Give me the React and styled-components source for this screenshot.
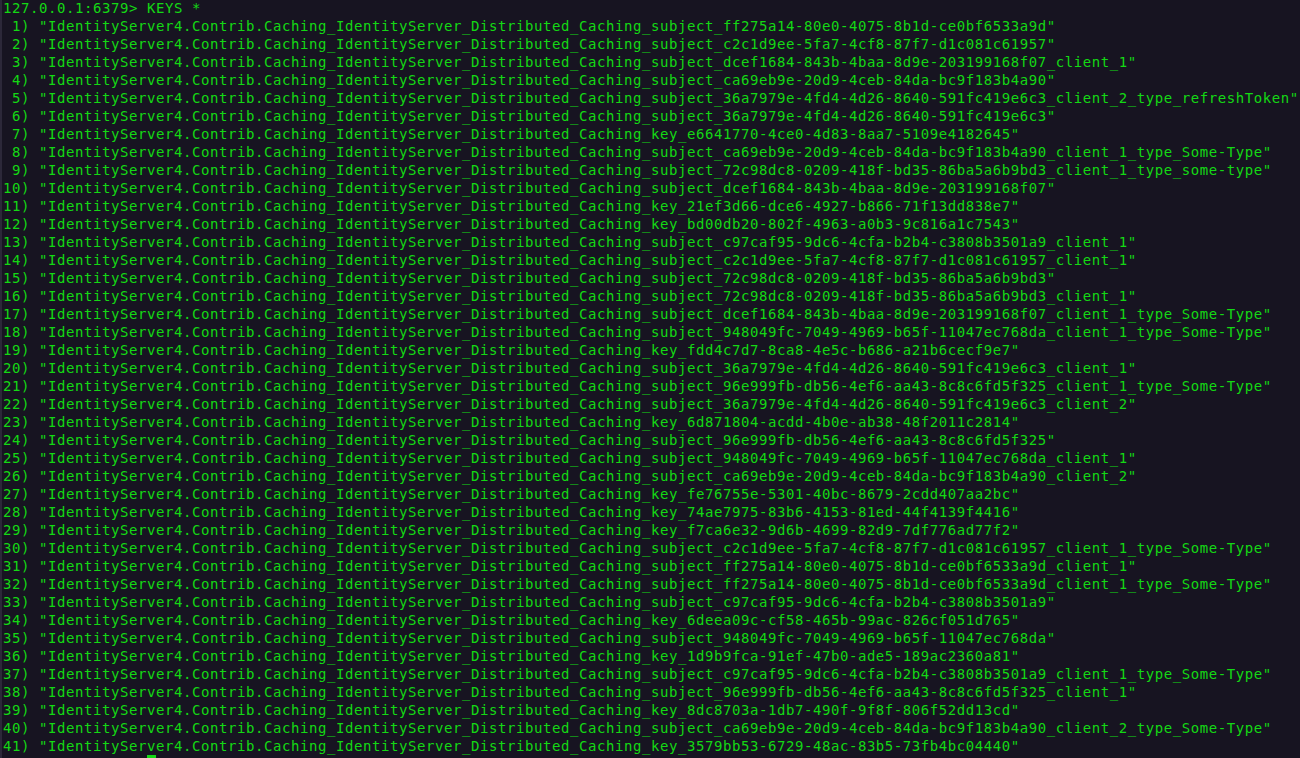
import React from "react";
import styled, { createGlobalStyle } from "styled-components";

const Global = createGlobalStyle`
  html, body {
    margin: 0;
    padding: 0;
    background: #171421;
    height: 758px;
    overflow: hidden;
  }
`;

const Terminal = styled.div`
  box-sizing: border-box;
  width: 1300px;
  height: 758px;
  overflow: hidden;
  background: #171421;
  border-left: 2px solid #2c2839;
  padding: 0 0 0 1px;
  font-family: "DejaVu Sans Mono", "Liberation Mono", monospace;
  font-size: 14px;
  letter-spacing: 0.57px;
  line-height: 18px;
  color: #14d814;
`;

const Screen = styled.div`
  margin-top: -1px;
  display: flex;
  flex-direction: column;
`;

const Line = styled.div`
  white-space: pre;
  height: 18px;
`;

const Cursor = styled.span`
  display: inline-block;
  width: 9px;
  height: 18px;
  vertical-align: top;
  background: #14d814;
`;

const PREFIX = "IdentityServer4.Contrib.Caching_IdentityServer_Distributed_Caching_";

const keys = [
  "subject_ff275a14-80e0-4075-8b1d-ce0bf6533a9d",
  "subject_c2c1d9ee-5fa7-4cf8-87f7-d1c081c61957",
  "subject_dcef1684-843b-4baa-8d9e-203199168f07_client_1",
  "subject_ca69eb9e-20d9-4ceb-84da-bc9f183b4a90",
  "subject_36a7979e-4fd4-4d26-8640-591fc419e6c3_client_2_type_refreshToken",
  "subject_36a7979e-4fd4-4d26-8640-591fc419e6c3",
  "key_e6641770-4ce0-4d83-8aa7-5109e4182645",
  "subject_ca69eb9e-20d9-4ceb-84da-bc9f183b4a90_client_1_type_Some-Type",
  "subject_72c98dc8-0209-418f-bd35-86ba5a6b9bd3_client_1_type_some-type",
  "subject_dcef1684-843b-4baa-8d9e-203199168f07",
  "key_21ef3d66-dce6-4927-b866-71f13dd838e7",
  "key_bd00db20-802f-4963-a0b3-9c816a1c7543",
  "subject_c97caf95-9dc6-4cfa-b2b4-c3808b3501a9_client_1",
  "subject_c2c1d9ee-5fa7-4cf8-87f7-d1c081c61957_client_1",
  "subject_72c98dc8-0209-418f-bd35-86ba5a6b9bd3",
  "subject_72c98dc8-0209-418f-bd35-86ba5a6b9bd3_client_1",
  "subject_dcef1684-843b-4baa-8d9e-203199168f07_client_1_type_Some-Type",
  "subject_948049fc-7049-4969-b65f-11047ec768da_client_1_type_Some-Type",
  "key_fdd4c7d7-8ca8-4e5c-b686-a21b6cecf9e7",
  "subject_36a7979e-4fd4-4d26-8640-591fc419e6c3_client_1",
  "subject_96e999fb-db56-4ef6-aa43-8c8c6fd5f325_client_1_type_Some-Type",
  "subject_36a7979e-4fd4-4d26-8640-591fc419e6c3_client_2",
  "key_6d871804-acdd-4b0e-ab38-48f2011c2814",
  "subject_96e999fb-db56-4ef6-aa43-8c8c6fd5f325",
  "subject_948049fc-7049-4969-b65f-11047ec768da_client_1",
  "subject_ca69eb9e-20d9-4ceb-84da-bc9f183b4a90_client_2",
  "key_fe76755e-5301-40bc-8679-2cdd407aa2bc",
  "key_74ae7975-83b6-4153-81ed-44f4139f4416",
  "key_f7ca6e32-9d6b-4699-82d9-7df776ad77f2",
  "subject_c2c1d9ee-5fa7-4cf8-87f7-d1c081c61957_client_1_type_Some-Type",
  "subject_ff275a14-80e0-4075-8b1d-ce0bf6533a9d_client_1",
  "subject_ff275a14-80e0-4075-8b1d-ce0bf6533a9d_client_1_type_Some-Type",
  "subject_c97caf95-9dc6-4cfa-b2b4-c3808b3501a9",
  "key_6deea09c-cf58-465b-99ac-826cf051d765",
  "subject_948049fc-7049-4969-b65f-11047ec768da",
  "key_1d9b9fca-91ef-47b0-ade5-189ac2360a81",
  "subject_c97caf95-9dc6-4cfa-b2b4-c3808b3501a9_client_1_type_Some-Type",
  "subject_96e999fb-db56-4ef6-aa43-8c8c6fd5f325_client_1",
  "key_8dc8703a-1db7-490f-9f8f-806f52dd13cd",
  "subject_ca69eb9e-20d9-4ceb-84da-bc9f183b4a90_client_2_type_Some-Type",
  "key_3579bb53-6729-48ac-83b5-73fb4bc04440",
];

const PROMPT = "127.0.0.1:6379> ";

export default function App() {
  return (
    <>
      <Global />
      <Terminal>
        <Screen>
          <Line>{PROMPT + "KEYS *"}</Line>
          {keys.map((k, i) => (
            <Line key={i}>
              {String(i + 1).padStart(2, " ") + ') "' + PREFIX + k + '"'}
            </Line>
          ))}
          <Line>
            {" ".repeat(PROMPT.length)}
            <Cursor />
          </Line>
        </Screen>
      </Terminal>
    </>
  );
}
